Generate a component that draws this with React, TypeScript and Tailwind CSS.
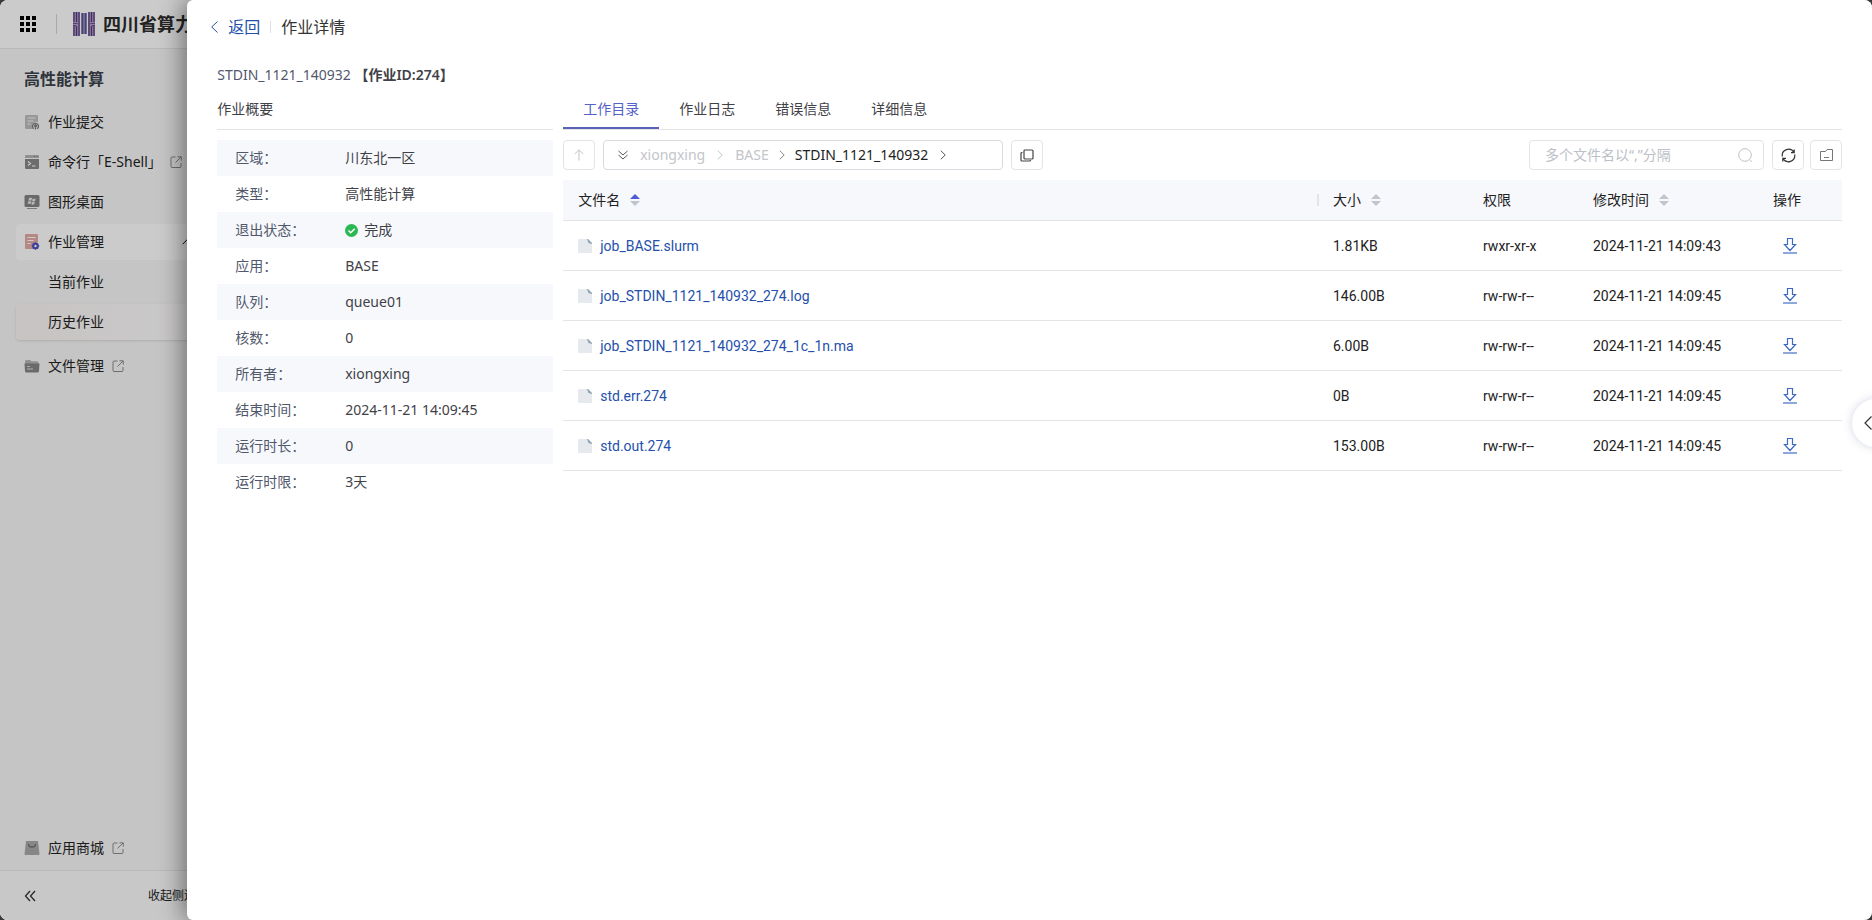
import { useState, type ReactNode } from 'react'
import clsx from 'clsx'

interface FileRow {
  name: string
  size: string
  mode: string
  mtime: string
}

const summary: { label: string; value: string; ok?: boolean }[] = [
  { label: '区域', value: '川东北一区' },
  { label: '类型', value: '高性能计算' },
  { label: '退出状态', value: '完成', ok: true },
  { label: '应用', value: 'BASE' },
  { label: '队列', value: 'queue01' },
  { label: '核数', value: '0' },
  { label: '所有者', value: 'xiongxing' },
  { label: '结束时间', value: '2024-11-21 14:09:45' },
  { label: '运行时长', value: '0' },
  { label: '运行时限', value: '3天' },
]

const files: FileRow[] = [
  { name: 'job_BASE.slurm', size: '1.81KB', mode: 'rwxr-xr-x', mtime: '2024-11-21 14:09:43' },
  { name: 'job_STDIN_1121_140932_274.log', size: '146.00B', mode: 'rw-rw-r--', mtime: '2024-11-21 14:09:45' },
  { name: 'job_STDIN_1121_140932_274_1c_1n.ma', size: '6.00B', mode: 'rw-rw-r--', mtime: '2024-11-21 14:09:45' },
  { name: 'std.err.274', size: '0B', mode: 'rw-rw-r--', mtime: '2024-11-21 14:09:45' },
  { name: 'std.out.274', size: '153.00B', mode: 'rw-rw-r--', mtime: '2024-11-21 14:09:45' },
]

const tabs = ['工作目录', '作业日志', '错误信息', '详细信息']

/* Icons */

function Logo() {
  return (
    <svg width="22" height="24" viewBox="0 0 22 24" fill="none">
      <path d="M0 0h7v24H0zM15 0h7v24h-7z" fill="#b39cc4" />
      <path d="M8 1h6v21H8z" fill="#a79cc4" />
      <path d="M1 0v10M3.5 0v10M6 0v24M1 14v10M3.5 14v10M16 0v24M18.5 0v10M21 0v10M18.5 14v10M21 14v10" stroke="#4d3a78" strokeWidth="1.2" />
      <path d="M9.5 1v21M12.5 1v21" stroke="#56538f" strokeWidth="1.6" />
      <path d="M0 11.5h4.5M0 13.5h3M17.5 11.5H22M19 13.5h3" stroke="#6d4a8a" strokeWidth="1" />
    </svg>
  )
}

function AppsIcon() {
  return (
    <svg width="16" height="16" viewBox="0 0 16 16" fill="#000">
      {[0, 6, 12].map((y) => [0, 6, 12].map((x) => <rect key={`${x}-${y}`} x={x} y={y} width="4" height="4" />))}
    </svg>
  )
}

function SubmitIcon() {
  return (
    <svg width="16" height="16" viewBox="0 0 16 16" fill="none">
      <path d="M2 1h11a1 1 0 0 1 1 1v6a4.5 4.5 0 0 0-5 7H2a1 1 0 0 1-1-1V2a1 1 0 0 1 1-1z" fill="#bdbdbd" />
      <path d="M3.5 4h8M3.5 7h6M3.5 10h3" stroke="#f5f5f5" strokeWidth="1.2" />
      <path d="M9.8 14.8a3 3 0 1 1 3.4 0M11.5 15.5V11M10 12.5l1.500-1.600 1.500 1.600" stroke="#7a7a7a" strokeWidth="1.3" />
    </svg>
  )
}

function ShellIcon() {
  return (
    <svg width="16" height="16" viewBox="0 0 16 16" fill="none">
      <path d="M1 2a1 1 0 0 1 1-1h12a1 1 0 0 1 1 1v2H1z" fill="#b5b5b5" />
      <path d="M10 2.5h1M12.5 2.5h1" stroke="#777" />
      <path d="M1 5h14v9a1 1 0 0 1-1 1H2a1 1 0 0 1-1-1z" fill="#888" />
      <path d="M4 7.5 6.500 9.500 4 11.500M8 12h3.500" stroke="#fff" strokeWidth="1.2" />
    </svg>
  )
}

function DesktopIcon() {
  return (
    <svg width="16" height="16" viewBox="0 0 16 16" fill="none">
      <rect x="0.5" y="1" width="15" height="12" rx="1.5" fill="#848484" />
      <path d="M3 14.5h10" stroke="#999" />
      <path d="M5 4.200c1-.6 2-.5 3 0l-.6 2.600c-1-.5-2-.5-3 0zM8.700 4.500c1 .5 2 .5 3 0l-.6 2.600c-1 .5-2 .5-3 0zM4.200 7.500c1-.5 2-.5 3 0L6.600 10c-1-.5-2-.5-3 0zM7.900 7.800c1 .5 2 .5 3 0l-.6 2.500c-1 .5-2 .5-3 0z" fill="#e8e8e8" />
    </svg>
  )
}

function JobIcon() {
  return (
    <svg width="16" height="16" viewBox="0 0 16 16" fill="none">
      <path d="M2 0h11a1 1 0 0 1 1 1v7l-5 3v4H2a1 1 0 0 1-1-1V1a1 1 0 0 1 1-1z" fill="#e3aaa4" />
      <path d="M3.5 3.5h8M3.5 6.5h6M3.5 9.5h3" stroke="#fff" strokeWidth="1.2" />
      <circle cx="11.5" cy="12" r="2.2" stroke="#4c50c4" strokeWidth="2" />
      <path d="M11.5 8.3v1.500M11.500 14.200v1.500M7.800 12h1.500M13.700 12h1.500M8.900 9.400l1 1M13.100 13.600l1 1M14.100 9.400l-1 1M9.900 13.600l-1 1" stroke="#4c50c4" strokeWidth="1.5" />
    </svg>
  )
}

function FolderIcon() {
  return (
    <svg width="16" height="16" viewBox="0 0 16 16" fill="none">
      <path d="M1 6V3.5A1.500 1.500 0 0 1 2.500 2H6l1.500 1.200H13A1.500 1.500 0 0 1 14.500 5v1z" fill="#b5b5b5" />
      <path d="M.5 5.5h15L15 13a1.500 1.500 0 0 1-1.500 1.500h-11A1.500 1.500 0 0 1 1 13z" fill="#858585" />
      <path d="M3 8.5h3M3 11h6" stroke="#ddd" />
    </svg>
  )
}

function MallIcon() {
  return (
    <svg width="16" height="16" viewBox="0 0 16 16" fill="none">
      <path d="M2 1h12l1.500 13a1 1 0 0 1-1 1h-13a1 1 0 0 1-1-1z" fill="#a9a9a9" />
      <path d="M4.500 4c0 4 7 4 7 0" stroke="#707070" strokeWidth="1.3" />
    </svg>
  )
}

function ExternalIcon() {
  return (
    <svg width="12" height="12" viewBox="0 0 12 12" fill="none" stroke="#8a8a8a">
      <path d="M5.500 1H2a1 1 0 0 0-1 1v8.500a1 1 0 0 0 1 1h8a1 1 0 0 0 1-1V7M7.500.8h3.800v3.800M11 1 5.500 6.500" />
    </svg>
  )
}

function Chevron({ className }: { className?: string }) {
  return (
    <svg width="6" height="10" viewBox="0 0 6 10" fill="none" stroke="currentColor" className={clsx('shrink-0', className)}>
      <path d="M.8.7 5.200 5 .8 9.300" />
    </svg>
  )
}

function SortIcon({ asc }: { asc?: boolean }) {
  return (
    <svg width="10" height="12" viewBox="0 0 10 12">
      <path d="M0 5 5 0l5 5z" fill={asc ? '#4f5bd5' : '#c0c4cc'} />
      <path d="M0 7h10l-5 5z" fill="#c0c4cc" />
    </svg>
  )
}

function FileIcon() {
  return (
    <svg width="14" height="14" viewBox="0 0 14 14">
      <path d="M0 0h10l4 4v10H0z" fill="#e6e9ee" />
      <path d="M9 0h1l4 4v1l-3.500-1z" fill="#8fa3b3" />
    </svg>
  )
}

function DownloadIcon() {
  return (
    <svg width="14" height="16" viewBox="0 0 14 16" fill="none">
      <path d="M4.500.5h5v6h3L7 12.500 1.500 6.500h3z" stroke="#3d68c4" strokeWidth="1.2" />
      <path d="M0 15h14" stroke="#8fa8dc" strokeWidth="2" />
    </svg>
  )
}

/* Sidebar */

interface NavItemProps {
  label: string
  icon?: ReactNode
  external?: boolean
  className?: string
  trailing?: ReactNode
}

function NavItem({ label, icon, external, className, trailing }: NavItemProps) {
  return (
    <a href="#" className={clsx('flex h-9 items-center rounded px-2 text-sm text-[#222]', className)}>
      <span className="w-6 shrink-0">{icon}</span>
      <span className="whitespace-nowrap">{label}</span>
      {external && <span className="ml-2"><ExternalIcon /></span>}
      {trailing}
    </a>
  )
}

function Sidebar() {
  return (
    <aside className="flex w-60 flex-1 flex-col bg-[#f7f7f7]">
      <h2 className="px-6 pt-[18px] text-base leading-6 font-semibold text-[#3c424d]">高性能计算</h2>
      <nav className="flex flex-1 flex-col gap-1 px-4 pt-[13px]">
        <NavItem label="作业提交" icon={<SubmitIcon />} />
        <NavItem label="命令行「E-Shell」" icon={<ShellIcon />} external />
        <NavItem label="图形桌面" icon={<DesktopIcon />} />
        <NavItem
          label="作业管理"
          icon={<JobIcon />}
          className="bg-[#fefefe]"
          trailing={<Chevron className="mr-[26px] ml-auto -rotate-90 text-black" />}
        />
        <NavItem label="当前作业" />
        <NavItem label="历史作业" className="bg-linear-to-r from-[#fbf5f5] to-[#fdfdfd] shadow-sm" />
        <NavItem label="文件管理" icon={<FolderIcon />} external className="mt-1" />
        <NavItem label="应用商城" icon={<MallIcon />} external className="mt-auto mb-1" />
      </nav>
      <button className="flex h-[50px] shrink-0 items-center justify-between border-t border-[#e8e8e8] bg-[#fafafa] px-6 text-xs text-[#222]">
        <svg width="12" height="12" viewBox="0 0 12 12" fill="none" stroke="#333" strokeWidth="1.3">
          <path d="M6 1 1.500 6 6 11M11 1 6.500 6 11 11" />
        </svg>
        <span className="w-[68px] text-left">收起侧边栏</span>
      </button>
    </aside>
  )
}

/* Drawer */

function Summary() {
  return (
    <section className="w-[336px] shrink-0">
      <h3 className="h-10 border-b border-[#e4e4e7] pt-[9px] text-sm leading-5 text-[#3f4147]">作业概要</h3>
      <dl className="pt-[10px] text-sm">
        {summary.map((item) => (
          <div key={item.label} className="flex h-9 items-center pl-[18px] odd:bg-[#f7f8fc]">
            <dt className="w-[110px] text-[#51586c]">{item.label}：</dt>
            <dd className="flex items-center gap-[6px] text-[#3f4147]">
              {item.ok && (
                <svg width="13" height="13" viewBox="0 0 13 13" fill="none">
                  <circle cx="6.5" cy="6.5" r="6.5" fill="#2bb853" />
                  <path d="m3.500 6.500 2.200 2.200 4-4" stroke="#fff" strokeWidth="1.5" />
                </svg>
              )}
              {item.value}
            </dd>
          </div>
        ))}
      </dl>
    </section>
  )
}

function Toolbar() {
  const box = 'flex h-[30px] w-8 shrink-0 items-center justify-center rounded border border-[#e2e4e8]'
  return (
    <div className="flex items-center gap-2 py-[10px]">
      <button aria-label="上一级" className={clsx(box, 'text-[#c0c4cc]')}>
        <svg width="10" height="12" viewBox="0 0 10 12" fill="none" stroke="currentColor">
          <path d="M5 11.500V1M.8 5 5 .8 9.200 5" />
        </svg>
      </button>
      <div className="flex h-[30px] w-[400px] items-center rounded border border-[#d9dbe0] pl-[14px] text-sm text-[#c3c5ca]">
        <svg width="10" height="10" viewBox="0 0 10 10" fill="none" stroke="#555">
          <path d="M.5 1 5 5 9.500 1M.5 5 5 9 9.500 5" />
        </svg>
        <button className="ml-3">xiongxing</button>
        <Chevron className="mx-3" />
        <button>BASE</button>
        <Chevron className="mx-[10px] text-[#888]" />
        <button className="text-[#222]">STDIN_1121_140932</button>
        <Chevron className="mx-3 text-[#555]" />
      </div>
      <button aria-label="复制路径" className={box}>
        <svg width="14" height="13" viewBox="0 0 14 13" fill="none" stroke="#444" strokeWidth="1.2">
          <rect x="4" y="1" width="9" height="9" rx="1" />
          <path d="M2.500 3.500H2a1 1 0 0 0-1 1V11a1 1 0 0 0 1 1h7.500a1 1 0 0 0 1-1" />
        </svg>
      </button>
      <label className="ml-auto flex h-[30px] w-[235px] items-center rounded border border-[#e2e4e8] pr-[10px] pl-[15px]">
        <input
          aria-label="搜索文件"
          placeholder="多个文件名以“,”分隔"
          className="min-w-0 flex-1 text-sm outline-none placeholder:text-[#bcc0c8]"
        />
        <svg width="15" height="15" viewBox="0 0 15 15" fill="none" stroke="#bcc0c8">
          <circle cx="7" cy="7" r="6.3" />
          <path d="m11.500 11.500 2.500 2.700" />
        </svg>
      </label>
      <div className="flex gap-[6px]">
        <button aria-label="刷新" className={box}>
          <svg width="15" height="15" viewBox="0 0 15 15" fill="none" stroke="#333" strokeWidth="1.2">
            <path d="M1.300 8.500A6.300 6.300 0 0 1 13 4.500M13.700 6.500A6.300 6.300 0 0 1 2 10.500M13.200 1.500v3.200H10M1.800 13.500v-3.200H5" />
          </svg>
        </button>
        <button aria-label="新建文件夹" className={box}>
          <svg width="13" height="12" viewBox="0 0 13 12" fill="none" stroke="#777">
            <path d="M.5 2.500h5L7 .5h5.500v11H.5zM4 8.500h5" />
          </svg>
        </button>
      </div>
    </div>
  )
}

function FileTable() {
  const th = 'border-b border-[#e4e4e7] p-0 text-left font-normal whitespace-nowrap'
  const td = 'border-b border-[#e4e4e7] py-0 pr-0 pl-4 whitespace-nowrap'
  return (
    <table className="w-full table-fixed border-separate border-spacing-0 text-sm text-[#222]">
      <thead>
        <tr className="h-[41px] bg-[#f7f8fc]">
          <th className={th}>
            <button className="flex items-center gap-[10px] pl-[15px]">文件名 <SortIcon asc /></button>
          </th>
          <th className={clsx(th, 'w-[150px]')}>
            <button className="flex h-3 items-center gap-[10px] border-l-2 border-[#e2e4e8] pl-[14px]">大小 <SortIcon /></button>
          </th>
          <th className={clsx(th, 'w-[110px]')}>
            <span className="pl-4">权限</span>
          </th>
          <th className={clsx(th, 'w-[180px]')}>
            <button className="flex items-center gap-[10px] pl-4">修改时间 <SortIcon /></button>
          </th>
          <th className={clsx(th, 'w-[85px]')}>
            <span className="pl-4">操作</span>
          </th>
        </tr>
      </thead>
      <tbody className="font-[Roboto]">
        {files.map((file) => (
          <tr key={file.name} className="h-[50px]">
            <td className={td}>
              <a href="#" className="-ml-px flex items-center gap-2 text-[#2450ab]">
                <FileIcon />
                {file.name}
              </a>
            </td>
            <td className={td}>{file.size}</td>
            <td className={td}>{file.mode}</td>
            <td className={td}>{file.mtime}</td>
            <td className={td}>
              <button aria-label={`下载 ${file.name}`} className="ml-[10px] flex">
                <DownloadIcon />
              </button>
            </td>
          </tr>
        ))}
      </tbody>
    </table>
  )
}

function Drawer() {
  const [active, setActive] = useState(tabs[0])

  return (
    <main className="absolute inset-y-0 right-0 w-[90%] rounded-l-[6px] bg-white px-[30px] shadow-[-4px_0_24px_rgba(0,0,0,0.45)]">
      <header className="-ml-[6px] flex h-[53px] items-center text-base">
        <a href="#" className="flex items-center gap-[10px] text-[#2450ab]">
          <svg width="7" height="12" viewBox="0 0 7 12" fill="none" stroke="currentColor">
            <path d="M6.500.5.700 6l5.800 5.500" />
          </svg>
          返回
        </a>
        <span className="mx-[10px] h-3 w-px bg-[#dcdee3]" />
        <h1 className="text-[#333]">作业详情</h1>
      </header>

      <p className="pt-3 text-sm leading-5 text-[#51586c]">
        STDIN_1121_140932 <b className="font-semibold text-[#3f4147]">【作业ID:274】</b>
      </p>

      <div className="flex gap-[10px] pt-[5px]">
        <Summary />
        <section className="min-w-0 flex-1">
          <div className="flex h-10 border-b border-[#e4e4e7]">
            {tabs.map((tab) => (
              <button
                key={tab}
                onClick={() => setActive(tab)}
                className={clsx(
                  'w-24 border-b-2 text-sm',
                  tab === active ? 'border-[#5a62b8] text-[#5560c8]' : 'border-transparent text-[#3f4147]',
                )}
              >
                {tab}
              </button>
            ))}
          </div>
          <Toolbar />
          <FileTable />
        </section>
      </div>

      <button
        aria-label="展开"
        className="absolute top-[399px] -right-7 flex h-12 w-12 items-center rounded-full bg-white pl-3 text-[#333] shadow-[0_0_10px_rgba(80,90,150,0.25)]"
      >
        <svg width="8" height="14" viewBox="0 0 8 14" fill="none" stroke="currentColor" strokeWidth="1.2">
          <path d="M7.500.5 1 7l6.500 6.500" />
        </svg>
      </button>
    </main>
  )
}

export default function App() {
  return (
    <div className="h-screen bg-[#3a3a3a] font-['Noto_Sans','Noto_Sans_CJK_SC',sans-serif]">
      <div className="relative flex h-full flex-col overflow-hidden rounded-lg bg-[#f7f7f7]">
        <header className="flex h-[49px] shrink-0 items-center border-b border-[#e8e8e8] bg-[#fefefe] px-5 shadow-xs">
          <AppsIcon />
          <span className="mr-4 ml-5 h-5 w-px bg-[#d4d4d4]" />
          <Logo />
          <span className="ml-2 text-lg font-bold text-[#2c2c2c]">四川省算力</span>
        </header>
        <Sidebar />
        <div className="absolute inset-0 bg-black/20" />
        <Drawer />
      </div>
    </div>
  )
}
